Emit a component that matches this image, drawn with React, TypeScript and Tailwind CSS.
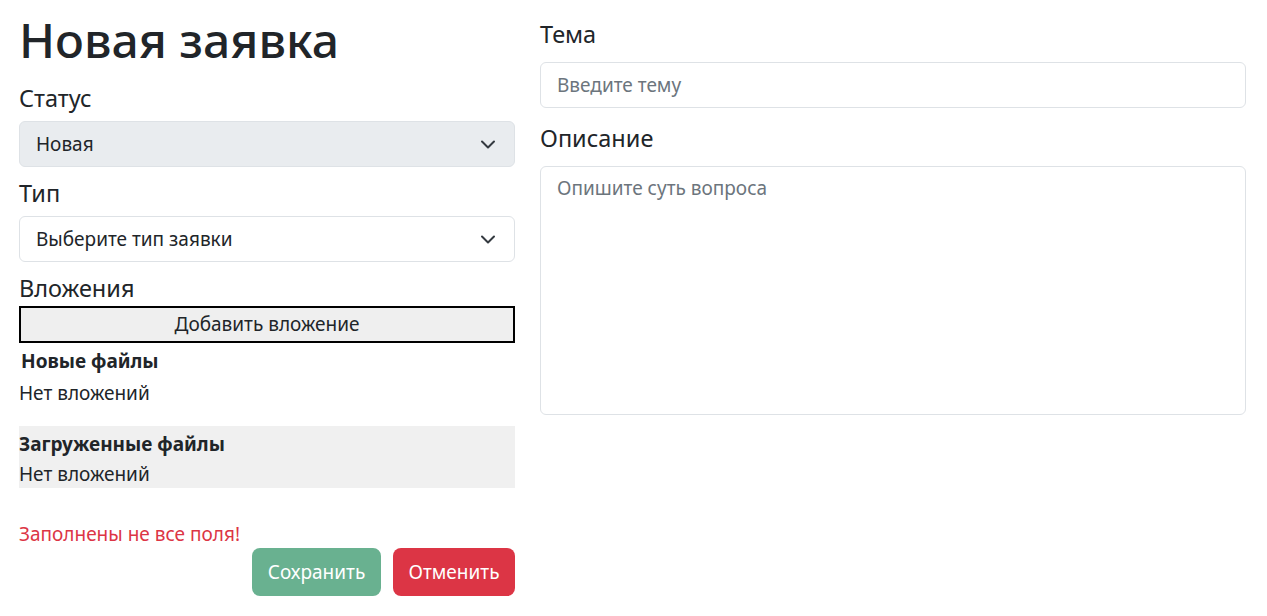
import React from "react";

function Chevron() {
  return (
    <svg width="16" height="16" viewBox="0 0 16 16" fill="none" className="shrink-0">
      <path d="M2 5.5l6 6 6-6" stroke="#343a40" strokeWidth="2" strokeLinecap="round" strokeLinejoin="round" />
    </svg>
  );
}

export default function App() {
  return (
    <div className="min-h-[616px] bg-white font-['Noto_Sans',sans-serif] text-[#212529]">
      <div className="flex gap-[25px] pl-[19px] pr-[21px]">
        <div className="flex w-[496px] flex-col">
          <h1 className="m-0 pt-[10px] text-[48px] font-medium leading-[60px]">Новая заявка</h1>
          <div className="mt-[10px] text-[23.5px] leading-[36px]">Статус</div>
          <div className="mt-[5px] flex h-[46px] items-center justify-between rounded-[6px] border border-[#dee2e6] bg-[#e9ecef] pl-4 pr-[18px] text-[19px]">
            <span>Новая</span>
            <Chevron />
          </div>
          <div className="mt-[8px] text-[23.5px] leading-[36px]">Тип</div>
          <div className="mt-[5px] flex h-[46px] items-center justify-between rounded-[6px] border border-[#dee2e6] bg-white pl-4 pr-[18px] text-[19px]">
            <span>Выберите тип заявки</span>
            <Chevron />
          </div>
          <div className="mt-[8px] text-[23.5px] leading-[36px]">Вложения</div>
          <div className="flex h-[37px] items-center justify-center border-2 border-black bg-[#efefef] text-[19px]">
            Добавить вложение
          </div>
          <div className="mt-[4px] pl-[2px] text-[19px] font-bold leading-[28px]">Новые файлы</div>
          <div className="mt-[4px] text-[19px] leading-[28px]">Нет вложений</div>
          <div className="mt-[19px] flex h-[62px] flex-col bg-[#f0f0f0] pt-[3px]">
            <div className="text-[19px] font-bold leading-[30px]">Загруженные файлы</div>
            <div className="text-[19px] leading-[30px]">Нет вложений</div>
          </div>
          <div className="mt-[32px] text-[19px] leading-[28px] text-[#dc3545]">Заполнены не все поля!</div>
          <div className="flex justify-end gap-3">
            <div className="flex h-[48px] w-[129px] items-center justify-center rounded-[8px] bg-[#69b190] text-[19px] text-white">
              Сохранить
            </div>
            <div className="flex h-[48px] w-[122px] items-center justify-center rounded-[8px] bg-[#dc3545] text-[19px] text-white">
              Отменить
            </div>
          </div>
        </div>
        <div className="flex w-[706px] flex-col">
          <div className="mt-[16px] text-[23.5px] leading-[36px]">Тема</div>
          <div className="mt-[10px] flex h-[46px] items-center rounded-[6px] border border-[#dee2e6] bg-white pl-4 text-[19px] text-[#6c757d]">
            Введите тему
          </div>
          <div className="mt-[12px] text-[23.5px] leading-[36px]">Описание</div>
          <div className="mt-[10px] h-[249px] rounded-[6px] border border-[#dee2e6] bg-white px-4 pt-[7px] text-[19px] leading-[28px] text-[#6c757d]">
            Опишите суть вопроса
          </div>
        </div>
      </div>
    </div>
  );
}
